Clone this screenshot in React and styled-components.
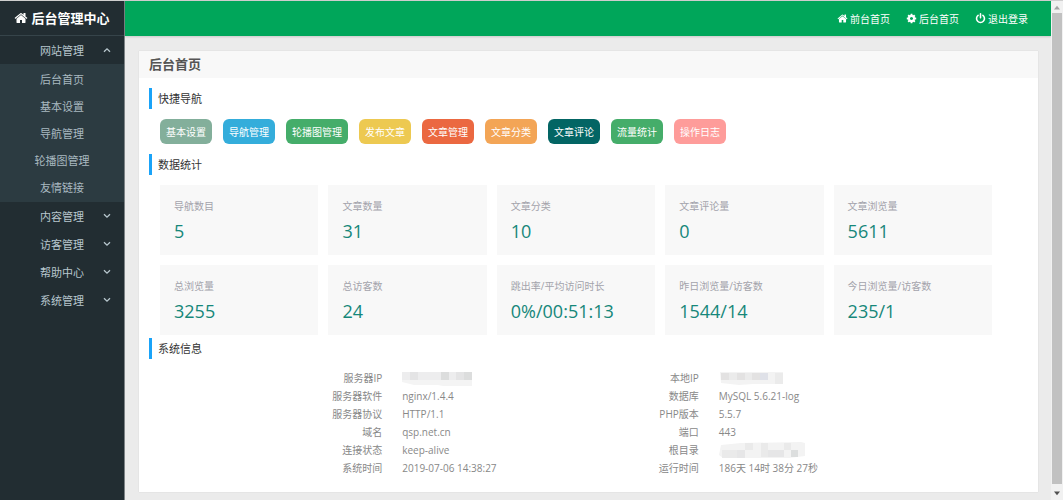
import React, { useState } from "react";
import styled, { createGlobalStyle } from "styled-components";

const GlobalStyle = createGlobalStyle`
  * {
    box-sizing: border-box;
  }
  body {
    margin: 0;
    font-family: "Open Sans", "Noto Sans CJK SC", sans-serif;
    font-size: 10px;
    line-height: 18px;
    background: #ebebeb;
  }
  ul {
    list-style: none;
    margin: 0;
    padding: 0;
  }
  a {
    color: inherit;
    text-decoration: none;
  }
`;

const ICONS = {
  home: "M1472 992v480q0 26-19 45t-45 19h-384v-384h-256v384h-384q-26 0-45-19t-19-45v-480q0-1 .5-3t.5-3l575-474 575 474q1 2 1 6zm223-69l-62 74q-8 9-21 11h-3q-13 0-21-7l-692-577-692 577q-12 8-24 7-13-2-21-11l-62-74q-8-10-7-23.5t11-21.5l719-599q32-26 76-26t76 26l244 204v-195q0-14 9-23t23-9h192q14 0 23 9t9 23v408l219 182q10 8 11 21.5t-7 23.5z",
  cog: "M1152 896q0-106-75-181t-181-75-181 75-75 181 75 181 181 75 181-75 75-181zm512-109v222q0 12-8 23t-20 13l-185 28q-19 54-39 91 35 50 107 138 10 12 10 25t-9 23q-27 37-99 108t-94 71q-12 0-26-9l-138-108q-44 23-91 38-16 136-29 186-7 28-36 28h-222q-14 0-24.5-8.5t-11.5-21.5l-28-184q-49-16-90-37l-141 107q-10 9-25 9-14 0-25-11-126-114-165-168-7-10-7-23 0-12 8-23 15-21 51-66.5t54-70.5q-27-50-41-99l-183-27q-13-2-21-12.5t-8-23.5v-222q0-12 8-23t19-13l186-28q14-46 39-92-40-57-107-138-10-12-10-24 0-10 9-23 26-36 98.5-107.5t94.5-71.5q13 0 26 10l138 107q44-23 91-38 16-136 29-186 7-28 36-28h222q14 0 24.5 8.5t11.5 21.5l28 184q49 16 90 37l142-107q9-9 24-9 13 0 25 10 129 119 165 170 7 8 7 22 0 12-8 23-15 21-51 66.5t-54 70.5q26 50 41 98l183 28q13 2 21 12.5t8 23.5z",
  power:
    "M1664 896q0 156-61 298t-164 245-245 164-298 61-298-61-245-164-164-245-61-298q0-182 80.5-343t226.5-270q43-32 95.5-25t83.5 50q32 42 24.5 94.5t-49.5 84.5q-98 74-151.5 181t-53.5 228q0 104 40.5 198.5t109.5 163.5 163.5 109.5 198.5 40.5 198.5-40.5 163.5-109.5 109.500-163.500 40.500-198.500q0-121-53.500-228t-151.500-181q-42-32-49.500-84.500t24.500-94.500q31-43 84-50t95 25q146 109 226.500 270t80.500 343zm-640-768v640q0 52-38 90t-90 38-90-38-38-90v-640q0-52 38-90t90-38 90 38 38 90z",
};

const Icon = ({ name, size }) => (
  <svg width={size} height={size} viewBox="0 0 1792 1792" fill="currentColor" aria-hidden="true">
    <path d={ICONS[name]} />
  </svg>
);

const menus = [
  {
    name: "网站管理",
    children: ["后台首页", "基本设置", "导航管理", "轮播图管理", "友情链接"],
  },
  { name: "内容管理", children: [] },
  { name: "访客管理", children: [] },
  { name: "帮助中心", children: [] },
  { name: "系统管理", children: [] },
];

const topLinks = [
  { icon: "home", name: "前台首页" },
  { icon: "cog", name: "后台首页" },
  { icon: "power", name: "退出登录" },
];

const shortcuts = [
  { name: "基本设置", color: "#83af9b" },
  { name: "导航管理", color: "#34addb" },
  { name: "轮播图管理", color: "#45ad6a" },
  { name: "发布文章", color: "#edc951" },
  { name: "文章管理", color: "#eb6841" },
  { name: "文章分类", color: "#f3a556" },
  { name: "文章评论", color: "#036564" },
  { name: "流量统计", color: "#45ad6a" },
  { name: "操作日志", color: "#fe9c9a" },
];

const stats = [
  ["导航数目", "5"],
  ["文章数量", "31"],
  ["文章分类", "10"],
  ["文章评论量", "0"],
  ["文章浏览量", "5611"],
  ["总浏览量", "3255"],
  ["总访客数", "24"],
  ["跳出率/平均访问时长", "0%/00:51:13"],
  ["昨日浏览量/访客数", "1544/14"],
  ["今日浏览量/访客数", "235/1"],
];

// 打码块
const ServerIpMask = () => (
  <svg width="72" height="16" viewBox="0 0 72 16" role="img" aria-label="已隐藏">
    <path d="M0 2h70v15H46l-10-2H12L0 12z" fill="#f4f4f4" />
    <path d="M0 2h8v8H0zM16 2h23v8H16zM47 2h7v8h-7z" fill="#ededee" />
    <path d="M8 2h8v8H8zM54 2h8v8h-8z" fill="#e4e4e5" />
    <path d="M39 2h8v8h-8zM62 2h8v8h-8z" fill="#dcdddd" />
  </svg>
);

const LocalIpMask = () => (
  <svg width="66" height="16" viewBox="0 0 66 16" role="img" aria-label="已隐藏">
    <path d="M1 2h63v12H34l-14 1-18-2z" fill="#f3f3f3" />
    <path d="M2 3h8v7H2zM18 3h8v7h-8zM33 3h8v7h-8z" fill="#e3e2e2" />
    <path d="M10 3h8v7h-8zM26 3h7v7h-7zM56 3h8v11h-8z" fill="#ebebeb" />
    <path d="M41 3h8v7h-8z" fill="#dfe1e8" />
  </svg>
);

const RootMask = () => (
  <svg width="88" height="18" viewBox="0 0 88 18" role="img" aria-label="已隐藏">
    <path d="M2 4l20-2 60-1 4 1v13l-16 2H4L0 14z" fill="#f3f3f3" />
    <path d="M3 9h15v8H3zM26 2h8v7h-8zM42 2h7v14h-7zM65 2h7v7h-7z" fill="#eaeaea" />
    <path d="M18 9h8v8h-8zM49 9h16v7H49z" fill="#e6e6e7" />
    <path d="M72 9h7v7h-7z" fill="#dcdede" />
  </svg>
);

const systemInfo = [
  ["服务器IP", <ServerIpMask />, "本地IP", <LocalIpMask />],
  ["服务器软件", "nginx/1.4.4", "数据库", "MySQL 5.6.21-log"],
  ["服务器协议", "HTTP/1.1", "PHP版本", "5.5.7"],
  ["域名", "qsp.net.cn", "端口", "443"],
  ["连接状态", "keep-alive", "根目录", <RootMask />],
  ["系统时间", "2019-07-06 14:38:27", "运行时间", "186天 14时 38分 27秒"],
];

const App = () => {
  const [openMenu, setOpenMenu] = useState("网站管理");

  return (
    <>
      <GlobalStyle />
      <Page>
        {/* Sidebar */}
        <Sidebar>
          <Logo href="#">
            <Icon name="home" size={14} />
            <span>后台管理中心</span>
          </Logo>
          <nav>
            {menus.map((menu) => {
              const open = openMenu === menu.name;
              return (
                <div key={menu.name}>
                  <MenuButton
                    type="button"
                    aria-expanded={open}
                    onClick={() => setOpenMenu(open ? "" : menu.name)}
                  >
                    <span>{menu.name}</span>
                    <Arrow $open={open} viewBox="0 0 8 6" aria-hidden="true">
                      <path d="M1 1.2l3 3 3-3" />
                    </Arrow>
                  </MenuButton>
                  {open && menu.children.length > 0 && (
                    <SubMenu>
                      {menu.children.map((child) => (
                        <li key={child}>
                          <SubLink href="#">{child}</SubLink>
                        </li>
                      ))}
                    </SubMenu>
                  )}
                </div>
              );
            })}
          </nav>
        </Sidebar>

        <Main>
          {/* Header */}
          <Header>
            {topLinks.map((link) => (
              <HeaderLink href="#" key={link.name + link.icon}>
                <Icon name={link.icon} size={11} />
                <span>{link.name}</span>
              </HeaderLink>
            ))}
          </Header>

          {/* Body */}
          <Panel>
            <PanelTitle>后台首页</PanelTitle>
            <PanelBody>
              <SectionTitle>快捷导航</SectionTitle>
              <Shortcuts>
                {shortcuts.map((item) => (
                  <ShortcutButton type="button" key={item.name} $color={item.color}>
                    {item.name}
                  </ShortcutButton>
                ))}
              </Shortcuts>

              <SectionTitle>数据统计</SectionTitle>
              <StatGrid>
                {stats.map(([label, value]) => (
                  <StatCard key={label}>
                    <StatLabel>{label}</StatLabel>
                    <StatValue>{value}</StatValue>
                  </StatCard>
                ))}
              </StatGrid>

              <SectionTitle>系统信息</SectionTitle>
              <InfoTable>
                <colgroup>
                  <col width="28%" />
                  <col width="19%" />
                  <col width="19%" />
                  <col width="34%" />
                </colgroup>
                <tbody>
                  {systemInfo.map(([label, value, label2, value2]) => (
                    <tr key={label}>
                      <th scope="row">{label}</th>
                      <td>{value}</td>
                      <th scope="row">{label2}</th>
                      <td>{value2}</td>
                    </tr>
                  ))}
                </tbody>
              </InfoTable>
            </PanelBody>
          </Panel>
        </Main>

        <ScrollTrack aria-hidden="true">
          <ScrollArrow viewBox="0 0 10 10" fill="#a3a3a3">
            <path d="M2.5 7L5 4l2.5 3z" />
          </ScrollArrow>
          <ScrollThumb />
          <ScrollArrow viewBox="0 0 10 10" fill="#505050">
            <path d="M2.5 3L5 6l2.5-3z" />
          </ScrollArrow>
        </ScrollTrack>
      </Page>
    </>
  );
};

const Page = styled.div`
  display: flex;
  min-height: 100vh;
  border-top: 1px solid #cfcfcf;
`;

// Sidebar
const Sidebar = styled.aside`
  flex: 0 0 125px;
  background: #222d32;
  border-right: 1px solid #7d8386;
`;

const Logo = styled.a`
  display: flex;
  align-items: center;
  justify-content: center;
  gap: 3px;
  height: 35px;
  border-bottom: 1px solid #36444a;
  color: #fff;
  font-size: 13px;
  font-weight: bold;
`;

const MenuButton = styled.button`
  display: grid;
  grid-template-columns: 1fr auto 1fr;
  align-items: center;
  width: 100%;
  height: 28px;
  padding: 0 13px;
  border: none;
  background: transparent;
  color: #b8c7ce;
  font-family: inherit;
  font-size: 11px;
  cursor: pointer;
  span {
    grid-column: 2;
  }
`;

const Arrow = styled.svg`
  width: 8px;
  height: 6px;
  justify-self: end;
  fill: none;
  stroke: currentColor;
  stroke-width: 1.3;
  transform: ${({ $open }) => ($open ? "rotate(180deg)" : "none")};
`;

const SubMenu = styled.ul`
  padding: 2px 0 1px;
  background: #2c3b41;
`;

const SubLink = styled.a`
  display: block;
  height: 27px;
  line-height: 27px;
  color: #a9b9c0;
  font-size: 11px;
  text-align: center;
  &:hover {
    color: #fff;
  }
`;

const Main = styled.main`
  flex: 1;
  min-width: 0;
`;

// Header
const Header = styled.header`
  display: flex;
  align-items: center;
  justify-content: flex-end;
  column-gap: 16px;
  height: 35px;
  padding-right: 23px;
  background: #00a65a;
  box-shadow: 0 1px 2px rgba(0, 0, 0, 0.15);
`;

const HeaderLink = styled.a`
  display: flex;
  align-items: center;
  gap: 2px;
  color: #fff;
`;

// Panel
const Panel = styled.section`
  margin: 15px 13px 8px 14px;
  background: #fff;
  box-shadow: 0 0 1px rgba(0, 0, 0, 0.15);
`;

const PanelTitle = styled.h1`
  margin: 0;
  padding-left: 10px;
  background: #f8f8f8;
  color: #555;
  font-size: 13px;
  line-height: 27px;
`;

const PanelBody = styled.div`
  padding: 10px 46px 15px 10px;
`;

const SectionTitle = styled.h2`
  margin: 0;
  padding-left: 6px;
  border-left: 3px solid #1aa3f8;
  color: #333;
  font-size: 11px;
  font-weight: normal;
  line-height: 21px;
`;

const Shortcuts = styled.div`
  display: flex;
  flex-wrap: wrap;
  gap: 11px;
  padding: 10px 0 10px 11px;
`;

const ShortcutButton = styled.button`
  height: 25px;
  padding: 0 6px;
  border: none;
  border-radius: 6px;
  background: ${({ $color }) => $color};
  color: #fff;
  font-family: inherit;
  font-size: 10px;
  cursor: pointer;
`;

const StatGrid = styled.div`
  display: grid;
  grid-template-columns: repeat(5, 1fr);
  gap: 10px;
  padding: 10px 0 3px 11px;
`;

const StatCard = styled.div`
  height: 70px;
  padding: 12px 14px;
  background: #f8f8f8;
`;

const StatLabel = styled.div`
  color: #a3a3ab;
`;

const StatValue = styled.div`
  margin-top: 4px;
  color: #16877a;
  font-size: 18px;
  line-height: 24px;
`;

const InfoTable = styled.table`
  width: calc(100% - 10px);
  margin-top: 10px;
  border-collapse: collapse;
  table-layout: fixed;
  color: #888;
  th,
  td {
    height: 18px;
    padding: 0;
    white-space: nowrap;
  }
  th {
    font-weight: normal;
    text-align: right;
  }
  td {
    padding-left: 20px;
    text-align: left;
  }
  svg {
    display: block;
  }
`;

// Scrollbar
const ScrollTrack = styled.div`
  display: flex;
  flex: 0 0 12px;
  flex-direction: column;
  align-items: center;
  background: #f1f1f1;
`;

const ScrollArrow = styled.svg`
  width: 12px;
  height: 12px;
`;

const ScrollThumb = styled.div`
  flex: 1;
  width: 10px;
  margin-bottom: 4px;
  background: #c1c1c1;
`;

export default App;
